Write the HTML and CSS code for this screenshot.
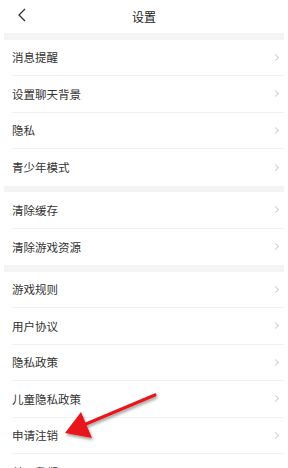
FILE: index.html
```html
<!DOCTYPE html>
<html lang="zh">
<head>
<meta charset="utf-8">
<link rel="stylesheet" href="styles.css">
</head>
<body>
<div class="page">
  <header class="topbar">
    <svg class="back" width="10" height="14" viewBox="0 0 10 14"><path d="M8 1 L2 7 L8 13" fill="none" stroke="#333" stroke-width="1.3"/></svg>
    <div class="title">设置</div>
  </header>
  <div class="gap"></div>
  <ul class="group">
    <li class="row"><span>消息提醒</span><i class="chev"></i></li>
    <li class="row"><span>设置聊天背景</span><i class="chev"></i></li>
    <li class="row"><span>隐私</span><i class="chev"></i></li>
    <li class="row"><span>青少年模式</span><i class="chev"></i></li>
  </ul>
  <div class="gap"></div>
  <ul class="group">
    <li class="row"><span>清除缓存</span><i class="chev"></i></li>
    <li class="row"><span>清除游戏资源</span><i class="chev"></i></li>
  </ul>
  <div class="gap"></div>
  <ul class="group">
    <li class="row"><span>游戏规则</span><i class="chev"></i></li>
    <li class="row"><span>用户协议</span><i class="chev"></i></li>
    <li class="row"><span>隐私政策</span><i class="chev"></i></li>
    <li class="row"><span>儿童隐私政策</span><i class="chev"></i></li>
    <li class="row"><span>申请注销</span><i class="chev"></i></li>
    <li class="row"><span>关于我们</span><i class="chev"></i></li>
  </ul>
  <svg class="arrow" width="288" height="468" viewBox="0 0 288 468">
    <defs>
      <filter id="sh" x="-20%" y="-20%" width="140%" height="140%">
        <feGaussianBlur in="SourceAlpha" stdDeviation="1.5"/>
        <feOffset dx="1" dy="2" result="b"/>
        <feComponentTransfer><feFuncA type="linear" slope="0.4"/></feComponentTransfer>
        <feMerge><feMergeNode/><feMergeNode in="SourceGraphic"/></feMerge>
      </filter>
    </defs>
    <g filter="url(#sh)">
      <line x1="155" y1="395" x2="86" y2="424" stroke="#e8191b" stroke-width="3.2" stroke-linecap="round"/>
      <path d="M65 433 L81 412 L86 424 L92 438 Z" fill="#e8191b"/>
    </g>
  </svg>
</div>
</body>
</html>
```
FILE: styles.css
```css
* { box-sizing: border-box; margin: 0; padding: 0; }
html, body { background: #fff; }
body {
  width: 288px;
  height: 468px;
  overflow: hidden;
  font-family: "Noto Sans CJK SC", "Noto Sans", sans-serif;
  color: #333;
}
.page {
  position: relative;
  padding: 0 4px;
  height: 468px;
  overflow: hidden;
}
.topbar {
  height: 33px;
  display: flex;
  align-items: center;
  justify-content: center;
  position: relative;
}
.back {
  position: absolute;
  left: 13px;
  top: 8px;
}
.title {
  font-size: 12px;
  color: #222;
  line-height: 1;
}
.gap {
  height: 6.5px;
  background: #f4f4f4;
}
.group { list-style: none; }
.row {
  height: 36.5px;
  margin-left: 8px;
  padding-right: 4px;
  display: flex;
  align-items: center;
  justify-content: space-between;
  border-bottom: 1px solid #f2f2f2;
  font-size: 11.5px;
  color: #333;
}
.row:last-child { border-bottom: none; }
.chev {
  width: 5px;
  height: 5px;
  border-top: 1px solid #d0d0d0;
  border-right: 1px solid #d0d0d0;
  transform: rotate(45deg);
  margin-right: 2px;
}
.arrow {
  position: absolute;
  left: 0;
  top: 0;
  pointer-events: none;
}
```
